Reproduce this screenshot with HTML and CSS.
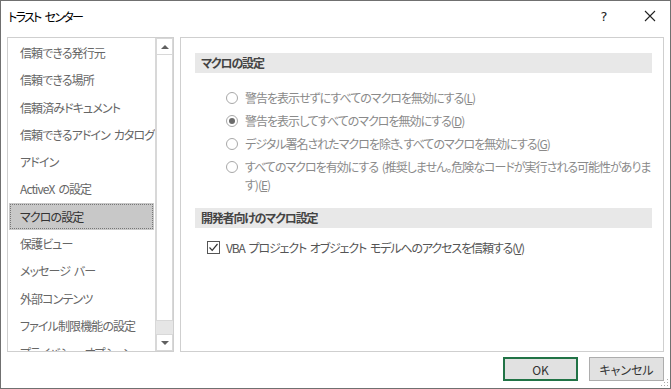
FILE: index.html
```html
<!DOCTYPE html>
<html lang="ja">

<head>
    <meta charset="UTF-8">
    <title>トラスト センター</title>
    <link rel="stylesheet" href="styles.css">
</head>

<body>

    <div class="dialog">
        <div class="titlebar">
            <span class="title">トラスト センター</span>
            <span class="help">?</span>
            <span class="close">
                <svg width="12" height="12" viewBox="0 0 12 12">
                    <path d="M1 1 L11 11 M11 1 L1 11" stroke="#222" stroke-width="1.1" fill="none" />
                </svg>
            </span>
        </div>

        <div class="main">
            <div class="nav-list">
                <div class="nav-items">
                    <div class="nav-item">信頼できる発行元</div>
                    <div class="nav-item">信頼できる場所</div>
                    <div class="nav-item">信頼済みドキュメント</div>
                    <div class="nav-item">信頼できるアドイン カタログ</div>
                    <div class="nav-item">アドイン</div>
                    <div class="nav-item">ActiveX の設定</div>
                    <div class="nav-item selected">マクロの設定</div>
                    <div class="nav-item">保護ビュー</div>
                    <div class="nav-item">メッセージ バー</div>
                    <div class="nav-item">外部コンテンツ</div>
                    <div class="nav-item">ファイル制限機能の設定</div>
                    <div class="nav-item">プライバシー オプション</div>
                </div>
                <div class="scrollbar">
                    <div class="sb-btn"><span class="arrow-up"></span></div>
                    <div class="sb-thumb"></div>
                    <div class="sb-track"></div>
                    <div class="sb-btn"><span class="arrow-down"></span></div>
                </div>
            </div>

            <div class="content">
                <div class="section-header">マクロの設定</div>
                <div class="options">
                    <div class="option">
                        <span class="radio"></span>
                        <span>警告を表示せずにすべてのマクロを無効にする(<u>L</u>)</span>
                    </div>
                    <div class="option">
                        <span class="radio checked"></span>
                        <span>警告を表示してすべてのマクロを無効にする(<u>D</u>)</span>
                    </div>
                    <div class="option">
                        <span class="radio"></span>
                        <span>デジタル署名されたマクロを除き、すべてのマクロを無効にする(<u>G</u>)</span>
                    </div>
                    <div class="option">
                        <span class="radio"></span>
                        <span>すべてのマクロを有効にする (推奨しません。危険なコードが実行される可能性がありま<br>す)(<u>E</u>)</span>
                    </div>
                </div>

                <div class="section-header second">開発者向けのマクロ設定</div>
                <div class="check-row">
                    <span class="checkbox">
                        <svg width="11" height="11" viewBox="0 0 11 11">
                            <path d="M1.5 5.5 L4.2 8.3 L9.5 2" stroke="#333" stroke-width="1.2" fill="none" />
                        </svg>
                    </span>
                    <span>VBA プロジェクト オブジェクト モデルへのアクセスを信頼する(<u>V</u>)</span>
                </div>
            </div>
        </div>

        <div class="footer">
            <button class="btn primary">OK</button>
            <button class="btn">キャンセル</button>
        </div>

        <svg class="grip" width="8" height="8" viewBox="0 0 8 8">
            <rect x="6" y="0" width="1" height="1" fill="#aaa" />
            <rect x="3" y="3" width="1" height="1" fill="#aaa" />
            <rect x="6" y="3" width="1" height="1" fill="#aaa" />
            <rect x="0" y="6" width="1" height="1" fill="#aaa" />
            <rect x="3" y="6" width="1" height="1" fill="#aaa" />
            <rect x="6" y="6" width="1" height="1" fill="#aaa" />
        </svg>
    </div>

</body>

</html>
```

FILE: styles.css
```css
body {
    margin: 0;
    padding: 0;
    font-family: "Noto Sans CJK JP", "Noto Sans", sans-serif;
    font-feature-settings: "palt";
    font-size: 12px;
    background: #fff;
}

.dialog {
    position: relative;
    width: 671px;
    height: 389px;
    box-sizing: border-box;
    border: 1px solid #707070;
    background: #fff;
    display: flex;
    flex-direction: column;
}

.titlebar {
    height: 30px;
    display: flex;
    align-items: center;
    padding-left: 7px;
    color: #000;
}

.title {
    flex: 1;
    letter-spacing: -1.7px;
    word-spacing: 3px;
}

.help {
    width: 12px;
    margin-right: 34px;
    font-size: 13px;
    text-align: center;
    font-family: "DejaVu Sans", sans-serif;
    color: #222;
}

.close {
    width: 12px;
    height: 12px;
    margin-right: 14px;
    display: flex;
}

.main {
    display: flex;
    gap: 6px;
    padding: 6px 6px 0 6px;
}

/* left list */
.nav-list {
    width: 167px;
    height: 315px;
    flex-shrink: 0;
    box-sizing: border-box;
    border: 1px solid #cfcfcf;
    display: flex;
    overflow: hidden;
}

.nav-items {
    flex: 1;
    min-width: 0;
    padding-top: 1px;
    overflow: hidden;
}

.nav-item {
    height: 27.3px;
    line-height: 27.3px;
    padding-left: 11px;
    margin: 0 1px;
    box-sizing: border-box;
    color: #666;
    letter-spacing: -0.9px;
    word-spacing: 2px;
    white-space: nowrap;
}

.nav-item.selected {
    background: #c8c8c8;
    outline: 1px dotted #777;
    outline-offset: -2px;
    color: #333;
}

.scrollbar {
    width: 17px;
    flex-shrink: 0;
    display: flex;
    flex-direction: column;
    border-left: 1px solid #d8d8d8;
    background: #e9e9e9;
}

.sb-btn {
    height: 17px;
    background: #fff;
    border: 1px solid #d8d8d8;
    box-sizing: border-box;
    display: flex;
    align-items: center;
    justify-content: center;
}

.sb-thumb {
    flex: 1;
    background: #fff;
    border: 1px solid #d8d8d8;
    margin-top: -1px;
}

.sb-track {
    height: 13px;
    background: #e6e6e6;
}

.arrow-up {
    width: 0;
    height: 0;
    border-left: 4px solid transparent;
    border-right: 4px solid transparent;
    border-bottom: 4px solid #606060;
}

.arrow-down {
    width: 0;
    height: 0;
    border-left: 4px solid transparent;
    border-right: 4px solid transparent;
    border-top: 4px solid #606060;
}

/* right panel */
.content {
    flex: 1;
    min-width: 0;
    height: 315px;
    box-sizing: border-box;
    border: 1px solid #cfcfcf;
    padding: 15px 11px 0 14px;
}

.section-header {
    height: 20px;
    line-height: 20px;
    padding-left: 6px;
    background: #e8e8e8;
    font-weight: bold;
    color: #444;
    letter-spacing: -1.2px;
}

.section-header.second {
    margin-top: 12px;
}

.options {
    margin-top: 13px;
    padding-left: 31px;
}

.option {
    display: flex;
    align-items: flex-start;
    gap: 7px;
    padding: 2.5px 0;
    line-height: 18px;
    color: #8a8a8a;
    letter-spacing: -1px;
    word-spacing: 2px;
    white-space: nowrap;
}

.radio {
    width: 12px;
    height: 12px;
    margin-top: 3px;
    box-sizing: border-box;
    border: 1px solid #a8a8a8;
    border-radius: 50%;
    background: #fff;
    flex-shrink: 0;
    display: flex;
    align-items: center;
    justify-content: center;
}

.radio.checked::after {
    content: "";
    width: 6px;
    height: 6px;
    border-radius: 50%;
    background: #6a6a6a;
}

.check-row {
    display: flex;
    align-items: center;
    gap: 6px;
    height: 20px;
    margin-top: 9px;
    padding-left: 12px;
    color: #555;
    letter-spacing: -1.1px;
    word-spacing: 2px;
    white-space: nowrap;
}

.checkbox {
    width: 13px;
    height: 13px;
    flex-shrink: 0;
    box-sizing: border-box;
    border: 1px solid #555;
    background: #fff;
    display: flex;
    align-items: center;
    justify-content: center;
}

/* buttons */
.footer {
    display: flex;
    justify-content: flex-end;
    gap: 11px;
    padding: 5px 6px 0 0;
}

.btn {
    width: 75px;
    height: 24px;
    box-sizing: border-box;
    background: #e1e1e1;
    border: 1px solid #adadad;
    font-family: inherit;
    font-feature-settings: "palt";
    font-size: 12px;
    color: #333;
    padding: 0;
}

.btn.primary {
    border: 2px solid #217346;
}

.grip {
    position: absolute;
    right: 1px;
    bottom: 1px;
}
```
